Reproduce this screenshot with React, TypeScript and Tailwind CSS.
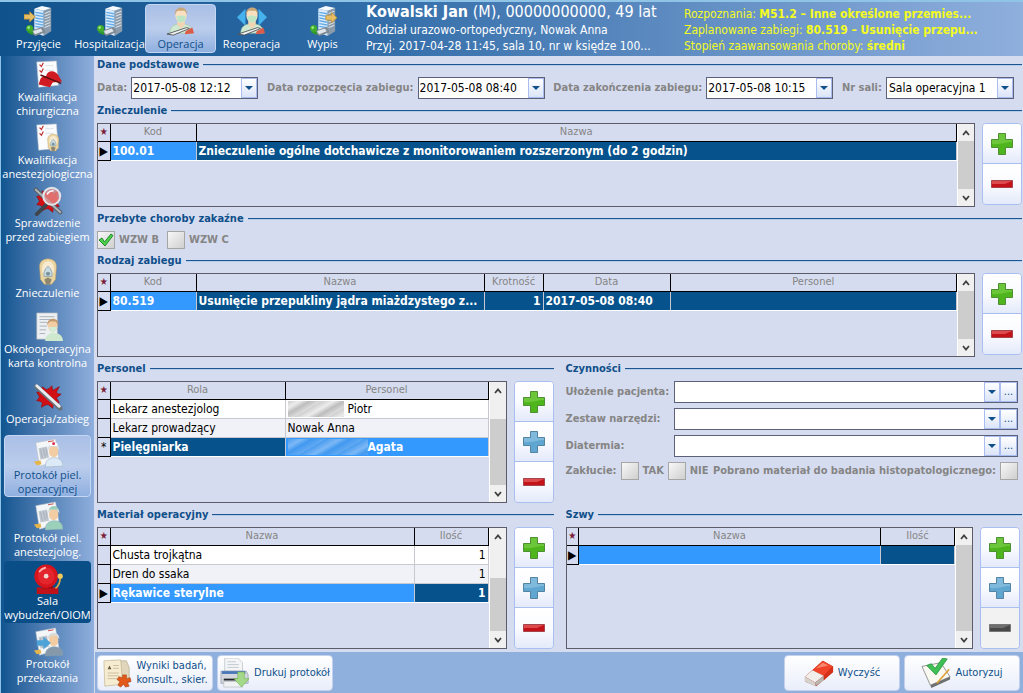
import { useState } from 'react';
import type { ReactNode } from 'react';

// ---------- icons ----------

const Svg = ({ children, className = 'w-[30px] h-[30px]' }: { children: ReactNode; className?: string }) => (
  <svg viewBox="0 0 32 32" className={`${className} shrink-0`} aria-hidden="true">{children}</svg>
);

const Building = () => (
  <g>
    <path d="M11 3 L21 5 L21 32 L11 28Z" fill="#dcecfb" />
    <path d="M21 5 L29 2 L29 27 L21 32Z" fill="#8b9bab" />
    <path d="M11 3 L19 0 L29 2 L21 5Z" fill="#f6fafe" />
    {[6, 9, 12, 15, 18, 21].map((y) => (
      <g key={y}>
        <path d={`M12 ${y} L20.500 ${y + 1.500} L20.500 ${y + 3} L12 ${y + 1.500}Z`} fill="#64abe6" />
        <path d={`M22 ${y + 1.500} L28 ${y - 1} L28 ${y} L22 ${y + 2.500}Z`} fill="#dfe6ec" />
      </g>
    ))}
    <path d="M6 27 L20 22 L23 28 L12 32Z" fill="#7f8991" />
    <path d="M9 27 L18 24 L20 27 L12 30Z" fill="#dfe5ea" />
    <circle cx="6" cy="24" r="3.800" fill="#3fae2a" />
    <circle cx="5" cy="23" r="1.400" fill="#a5ea8c" />
    <path d="M3 28 L10 27 L9 31Z" fill="#2f9a2a" />
  </g>
);

const GoldArrow = ({ x, y }: { x: number; y: number }) => (
  <path transform={`translate(${x} ${y})`} d="M0 3 H6 V0 L12 5.500 L6 11 V8 H0Z" fill="#e6bd62" stroke="#b98a2c" strokeWidth=".7" />
);

const Surgeon = () => (
  <g>
    <path d="M4 29 C4 21 10 19 16 19 C23 19 28 21 28 29Z" fill="#cfe8d0" stroke="#9cc3a5" strokeWidth=".6" />
    <path d="M12 16 H20 V20 L16 24 L12 20Z" fill="#f3d3b0" />
    <ellipse cx="16" cy="10" rx="6" ry="8" fill="#f8dfc0" />
    <path d="M9.500 9 C9 -1 23 -1 22.500 9 L20 5 H12Z" fill="#c9a57a" />
    <path d="M11 11 L16 10 L21 11 L20 16 L16 18 L12 16Z" fill="#bfe6c4" />
    <path d="M1 30 L22 23 L25 24 L8 31Z" fill="#eef1f3" stroke="#4c4c4c" strokeWidth=".9" />
    <path d="M21 27 L28 23 L30 29 L20 30Z" fill="#dc5a48" />
  </g>
);

const Sheet = () => (
  <g>
    <path d="M4 2 L25 1 L27 27 L6 29Z" fill="#fafbfc" stroke="#bcc4cf" strokeWidth=".6" />
    <path d="M7 5 l2 2 l2-4 M7 11 l2 2 l2-4" fill="none" stroke="#c02a2a" strokeWidth="1.200" />
    <path d="M13 6 H22 M13 11 H22" stroke="#dde1e7" />
  </g>
);

const Blood = () => (
  <path d="M4 11 L9 10 L10 5 L14 8 Q17 8 20 4 L21 9 L28 5 L25 11 Q26 13 30 13 L25 17 L28 22 L22 22 L21 28 L16 24 Q13 24 9 27 L10 22 Q8 20 4 20 L7 16Z" fill="#d20f14" stroke="#8f0a0d" strokeWidth=".7" />
);

const Mask = () => (
  <g>
    <path d="M7 12 C6 0 26 0 25 12 L24 25 L20 30 H12 L8 25Z" fill="#ead5a0" stroke="#b59a62" strokeWidth=".6" />
    <ellipse cx="16" cy="14" rx="6.500" ry="8.500" fill="#f7ead0" />
    <path d="M16 11 C20 14 21 19 20 22 H12 C11 19 12 14 16 11Z" fill="#c6dbe2" stroke="#7f98a3" strokeWidth=".8" />
    <circle cx="16" cy="19" r="2.200" fill="#7b929d" />
    <path d="M12 25 L16 23 L20 25 L18 30 H14Z" fill="#8e8770" />
  </g>
);

const Records = ({ coat }: { coat: string }) => (
  <g>
    <path d="M3 5 L24 1 L28 24 L7 30Z" fill="#f4f6f8" stroke="#b7bec8" strokeWidth=".6" />
    <path d="M6 11 L15 9 L17 21 L8 23Z" fill="#c1c7cf" />
    <path d="M8 12 l2 9 M11 11 l2 9 M14 11 l1 8" stroke="#a3abb6" strokeWidth=".8" />
    <path d="M16 4 L22 3" stroke="#c94a4a" />
    <path d="M1 25 L8 24 L9 28 L4 29Z" fill="#e6b54a" />
    <path d="M13 31 C13 23 18 21 23 21 C28 21 32 24 32 30Z" fill={coat} stroke="#8aa4b8" strokeWidth=".5" />
    <ellipse cx="22" cy="14" rx="5" ry="6.500" fill="#f2cda3" />
    <path d="M16 13 C15 4 29 4 28 13 L25 9 H19Z" fill="#d8dde2" />
  </g>
);

const icons: Record<string, ReactNode> = {
  admission: <Svg><Building /><GoldArrow x={0} y={6} /></Svg>,
  hospital: <Svg><Building /></Svg>,
  surgery: <Svg><Surgeon /></Svg>,
  reoperation: (
    <Svg>
      <path d="M9 3 V21 L0 12Z M23 3 V21 L32 12Z" fill="#45b2ee" />
      <Surgeon />
    </Svg>
  ),
  discharge: <Svg><Building /><GoldArrow x={19} y={7} /></Svg>,
  surgicalCheck: (
    <Svg>
      <Sheet />
      <path d="M8 20 Q10 17 14 17 C15 10 25 10 28 18 L31 23 L21 24 L18 29 L6 26Z" fill="#d01b22" />
      <path d="M8 16 L30 25" stroke="#5c0d10" strokeWidth="1.500" />
    </Svg>
  ),
  anesthesiaCheck: <Svg><Sheet /><g transform="translate(11 10) scale(.66)"><Mask /></g></Svg>,
  inspection: (
    <Svg>
      <Blood />
      <path d="M3 4 L29 28" stroke="#5a6067" strokeWidth="4.500" strokeLinecap="round" />
      <path d="M3 4 L29 28" stroke="#aeb5bb" strokeWidth="2" strokeLinecap="round" />
      <path d="M15 19 L4 30" stroke="#3f454b" strokeWidth="4" strokeLinecap="round" />
      <circle cx="20" cy="11" r="9" fill="#e88f8c" fillOpacity=".75" stroke="#dfe3e7" strokeWidth="2.200" />
      <path d="M15 9 Q17 5 22 5" fill="none" stroke="#fff" strokeWidth="1.500" />
    </Svg>
  ),
  anesthesia: <Svg><Mask /></Svg>,
  checklist: (
    <Svg>
      <path d="M4 1 H26 V29 H4Z" fill="#edf0f2" stroke="#a8afb8" strokeWidth=".7" />
      <path d="M7 5 H23 M7 8 H20 M7 11 H15 M7 15 H15 M7 19 H14 M7 23 H13" stroke="#a7aeb7" />
      <path d="M13 31 C13 24 18 22 22 22 C27 22 32 25 32 31Z" fill="#cfe9cf" />
      <ellipse cx="21" cy="15" rx="5" ry="6.500" fill="#f2cda3" />
      <path d="M15 14 C15 5 28 5 27 14 L24 10 H18Z" fill="#c29a6c" />
      <path d="M17 16 H26 L24 20 L21 22 L18 20Z" fill="#d3ecd5" />
    </Svg>
  ),
  operation: (
    <Svg>
      <Blood />
      <path d="M4 5 L29 28" stroke="#6b7278" strokeWidth="5" strokeLinecap="round" />
      <path d="M4 4 L28 26" stroke="#e9edf0" strokeWidth="3" strokeLinecap="round" />
    </Svg>
  ),
  nurseProtocol: <Svg><Records coat="#dce9f6" /><path d="M18 7 H26" stroke="#fff" strokeWidth="3" /><circle cx="22" cy="6" r="1.500" fill="#d24" /></Svg>,
  anesthProtocol: <Svg><Records coat="#9bd0ba" /><path d="M17 9 C18 4 27 4 27 9Z" fill="#9bd0ba" /></Svg>,
  bell: (
    <Svg>
      <path d="M4 25 H27 V32 H4Z" fill="#c01219" />
      <path d="M10 20 H21 V26 H10Z" fill="#97090f" />
      <circle cx="14" cy="13" r="12.500" fill="#d8141c" />
      <circle cx="14" cy="13" r="9" fill="#e3262e" />
      <circle cx="14" cy="13" r="2.500" fill="#f3d9d0" />
      <path d="M7 8 Q9 5 13 4" fill="none" stroke="#ffb5b0" strokeWidth="2" strokeLinecap="round" />
      <path d="M24 26 Q29 22 29 14" fill="none" stroke="#d9a845" strokeWidth="1.800" />
      <circle cx="29" cy="13" r="2.800" fill="#eecb5a" />
    </Svg>
  ),
  transfer: (
    <Svg>
      <Records coat="#8599ab" />
      <path d="M4 14 H11 V10 L19 17 L11 24 V20 H4Z" fill="#4da3d8" />
    </Svg>
  ),
  results: (
    <Svg>
      <path d="M10 3 H26 L29 10 V26 H10Z" fill="#e0d6bb" stroke="#a99d7e" strokeWidth=".6" />
      <path d="M2 3 L20 2 L22 28 L3 30Z" fill="#f5ecd2" stroke="#b8a981" strokeWidth=".6" />
      <path d="M8 8 l2 4 h-4Z" fill="#6a5a3a" />
      <path d="M12 8 H18 M12 11 H18 M6 16 H18 M6 19 H18 M6 22 H16" stroke="#cbbd9c" />
      <path d="M22 18 h4 v4 l4-1 1 4 -4 1 2 4 -4 1 -2-3 -3 3 -3-2 2-4 -3-2 2-3 4 1Z" fill="#e2591a" stroke="#a83c0d" strokeWidth=".6" />
    </Svg>
  ),
  printer: (
    <Svg>
      <path d="M5 0 H19 L24 5 V14 H5Z" fill="#f3f5f7" stroke="#b4bac2" strokeWidth=".7" />
      <path d="M8 4 H17 M8 7 H20 M8 10 H20" stroke="#c3c9d0" />
      <path d="M1 14 H28 L30 18 V27 H1Z" fill="#d3d7dd" stroke="#8b94a0" strokeWidth=".7" />
      <path d="M2 14 H27 V17 H2Z" fill="#4a77b8" />
      <path d="M4 22 H22 V24 H4Z" fill="#22262c" />
      <path d="M4 25 H24 V31 H4Z" fill="#f0f2f4" stroke="#a9b0b9" strokeWidth=".6" />
      <path d="M19 15 H26 V22 H31 L23 31 L15 22 H19Z" fill="#a5d98a" stroke="#6fb04c" strokeWidth=".6" />
    </Svg>
  ),
  eraser: (
    <Svg>
      <path d="M1 20 L20 3 L31 9 V15 L13 30 L1 25Z" fill="#a51c0c" />
      <path d="M9 13 L20 3 L31 9 L21 19Z" fill="#f0452a" />
      <path d="M21 19 L31 9 V15 L21 24Z" fill="#d7301a" />
      <path d="M9 13 L21 19 L12 26 L1 20Z" fill="#f1efec" />
      <path d="M1 20 L12 26 V30 L1 25Z" fill="#d5d1cc" />
      <path d="M12 26 L21 19 V24 L12 30Z" fill="#bbb6b0" />
      <path d="M13 11 L20 5 L26 8Z" fill="#f98a70" />
    </Svg>
  ),
  approve: (
    <Svg>
      <path d="M1 9 L21 5 L31 20 L10 29Z" fill="#f9f8f1" stroke="#77787a" strokeWidth=".8" />
      <path d="M10 29 L31 20 V23 L11 32Z" fill="#6d6e70" />
      <path d="M17 27 L30 12" stroke="#e0a23a" strokeWidth="1.800" />
      <path d="M6 8 L11 6 L15 11 L23 0 L28 1 L16 18Z" fill="#3fc055" stroke="#1c8a33" strokeWidth=".7" />
    </Svg>
  ),
};

const Plus = ({ blue = false }: { blue?: boolean }) => (
  <svg viewBox="0 0 22 22" className="w-[22px] h-[22px]" aria-hidden="true">
    <path d="M7.500 .5 H14.500 V6.500 H21.500 V14.500 H14.500 V21.500 H7.500 V14.500 H.5 V6.500 H7.500Z" fill={blue ? '#5fa6d0' : '#4fb51c'} stroke={blue ? '#5584a3' : '#4f8f33'} />
    <path d="M8 1 H14 V7 H21 V9 C14 9 10 12 1 11 V7 H8Z" fill={blue ? '#7fb9dc' : '#6cc63a'} />
  </svg>
);

const Minus = ({ gray = false }: { gray?: boolean }) => (
  <svg viewBox="0 0 22 8" className="w-[22px] h-2" aria-hidden="true">
    <path d="M.5 .5 H21.500 V7.500 H.5Z" fill={gray ? '#484848' : '#c4121a'} stroke={gray ? '#777' : '#a5444a'} />
    <path d="M1 1 H21 L14 4 H1Z" fill={gray ? '#6e6e6e' : '#dc4a4e'} />
  </svg>
);

const Caret = () => (
  <svg viewBox="0 0 8 4" className="w-2 h-1" aria-hidden="true"><path d="M0 0 H8 L4 4Z" fill="#0f4f8a" /></svg>
);

const Chevron = ({ down = false }: { down?: boolean }) => (
  <svg viewBox="0 0 8 6" className="w-2 h-1.5" aria-hidden="true">
    <path d={down ? 'M1 1 L4 4.500 L7 1' : 'M1 5 L4 1.500 L7 5'} fill="none" stroke="#404040" strokeWidth="1.800" />
  </svg>
);

// ---------- controls ----------

const Section = ({ title, children }: { title: string; children: ReactNode }) => (
  <section className="flex flex-col gap-1 min-w-0">
    <div className="flex items-center gap-1 h-4">
      <h2 className="text-[11px] leading-4 font-bold text-[#0f4f8a]">{title}</h2>
      <div className="flex-1 h-0.5 border-t border-[#1d5590] bg-[#b3cdea]" />
    </div>
    {children}
  </section>
);

const arrowBox = 'flex items-center justify-center w-4 border border-[#a9bdf0] bg-gradient-to-b from-white to-[#dbe4f8]';

const DateField = ({ id, label, value }: { id: string; label: string; value: string }) => (
  <div className="flex items-center gap-1">
    <label htmlFor={id} className="whitespace-nowrap text-[11px] font-bold text-[#858585]">{label}</label>
    <div className="flex w-[127px] h-[22px] border border-[#5c6078] bg-white">
      <input id={id} defaultValue={value} className="flex-1 min-w-0 px-px text-[12px] text-black outline-none" />
      <button aria-label="Wybierz datę" className={arrowBox}><Caret /></button>
    </div>
  </div>
);

const SelectField = ({ id, options, more = false }: { id: string; options: string[]; more?: boolean }) => (
  <div className="flex flex-1 min-w-0 h-[22px] border border-[#5c6078] bg-white">
    <div className="relative flex flex-1 min-w-0">
      <select id={id} className="w-full appearance-none pl-0.5 pr-4 text-[12px] text-black outline-none">
        {options.map((o) => <option key={o}>{o}</option>)}
      </select>
      <span className={`${arrowBox} absolute inset-y-0 right-0 pointer-events-none`}><Caret /></span>
    </div>
    {more && (
      <button aria-label="Więcej" className="w-[17px] border border-[#a9bdf0] bg-gradient-to-b from-white to-[#dbe4f8] text-[11px] leading-4 text-[#0f4f8a]">...</button>
    )}
  </div>
);

const Check = ({ label, checked = false, before = false }: { label: string; checked?: boolean; before?: boolean }) => (
  <label className="flex items-center gap-1 text-[11px] font-bold text-[#858585] whitespace-nowrap">
    {before && label}
    <span className="relative flex">
      <input
        type="checkbox"
        defaultChecked={checked}
        className="peer appearance-none w-[18px] h-[18px] border border-[#a6a6a6] bg-gradient-to-br from-[#f8f8f8] to-[#cfcfcf]"
      />
      <svg viewBox="0 0 18 18" className="hidden peer-checked:block absolute inset-0 w-[18px] h-[18px] pointer-events-none" aria-hidden="true">
        <path d="M2 9 L5 7 L7.500 11 L14 3 L16 4.500 L8 15Z" fill="#4fd04a" stroke="#1f8a2a" />
      </svg>
    </span>
    {!before && label}
  </label>
);

const Actions = ({ kinds }: { kinds: string[] }) => (
  <div className="flex flex-col w-10 shrink-0 self-start rounded border border-[#a9bff0] overflow-hidden divide-y divide-[#a9bff0]">
    {kinds.map((k) => (
      <button
        key={k}
        aria-label={k === 'add' ? 'Dodaj' : k === 'copy' ? 'Dodaj wiele' : 'Usuń'}
        disabled={k === 'off'}
        className="flex items-center justify-center h-10 bg-gradient-to-b from-white via-[#fafbff] to-[#e4eafa] disabled:from-[#f2f2f2] disabled:via-[#f2f2f2] disabled:to-[#f2f2f2]"
      >
        {k === 'add' && <Plus />}
        {k === 'copy' && <Plus blue />}
        {k === 'remove' && <Minus />}
        {k === 'off' && <Minus gray />}
      </button>
    ))}
  </div>
);

type Column = { name: string; width?: string; right?: boolean };

type GridProps = {
  label: string;
  height: string;
  columns: Column[];
  rows: ReactNode[][];
  selected: number;
  focus: number;
  marker?: string;
  thumb?: string;
};

const Grid = ({ label, height, columns, rows, selected, focus, marker = '▶', thumb = 'flex-1' }: GridProps) => (
  <div className={`flex flex-1 min-w-0 border border-[#5c5c68] ${height}`}>
    <div className="flex-1 min-w-0">
      <table aria-label={label} className="w-full table-fixed border-collapse">
        <thead>
          <tr className="h-[17px] text-[11px] leading-4 text-[#858585]">
            <th className="w-3 p-0 border-r border-b border-black text-[10px] leading-4 font-normal text-[#7a1f3a]">★</th>
            {columns.map((c) => (
              <th key={c.name} className={`${c.width ?? ''} p-0 border-r border-b border-black font-normal`}>{c.name}</th>
            ))}
          </tr>
        </thead>
        <tbody>
          {rows.map((row, i) => {
            const on = i === selected;
            return (
              <tr key={i} className={on ? 'h-[19px] text-[12px] leading-4 font-bold text-white' : 'h-[19px] text-[12px] leading-4 text-black'}>
                <td className="p-0 border-r border-b border-black text-center text-[12px] leading-4 font-normal text-black">{on ? marker : ''}</td>
                {row.map((cell, j) => {
                  const tone = on
                    ? j === focus ? 'bg-[#3399ff] border-b-white' : 'bg-[#05528c] border-b-white'
                    : i % 2 ? 'bg-[#f1f2f8] border-b-[#c8c8d0]' : 'bg-white border-b-[#c8c8d0]';
                  return (
                    <td key={j} className={`${tone} ${columns[j].right ? 'text-right' : ''} px-0.5 py-0 border-r border-b border-r-[#c8c8d0] truncate`}>
                      {cell}
                    </td>
                  );
                })}
              </tr>
            );
          })}
        </tbody>
      </table>
    </div>
    <div className="flex flex-col w-[17px] shrink-0 border-l border-white bg-[#f0f0f0]">
      <button aria-label="W górę" className="flex items-center justify-center h-[17px]"><Chevron /></button>
      <div className="flex flex-col flex-1 justify-end">
        <div className={`${thumb} bg-[#cdcdcd]`} />
      </div>
      <button aria-label="W dół" className="flex items-center justify-center h-[17px]"><Chevron down /></button>
    </div>
  </div>
);

const Redacted = ({ onBlue = false }: { onBlue?: boolean }) => (
  <span
    className={
      onBlue
        ? 'inline-block align-top w-20 h-4 bg-[repeating-linear-gradient(150deg,#4a9cf0_0px,#7cb8f6_7px,#4299f0_12px,#62aaf2_19px)]'
        : 'inline-block align-top w-14 h-4 mr-1 bg-[repeating-linear-gradient(150deg,#cfcfcf_0px,#ececec_6px,#bdbdbd_11px,#dedede_17px)]'
    }
  />
);

const FooterButton = ({ icon, children }: { icon: string; children: ReactNode }) => (
  <button className="flex items-center justify-center gap-1 w-29 h-9 rounded-sm border border-[#c3d0ee] bg-gradient-to-b from-white to-[#e9eefa] text-[11px] leading-[14px] text-left text-[#0f4f8a] whitespace-nowrap">
    {icons[icon]}
    <span>{children}</span>
  </button>
);

// ---------- data ----------

const tabs = [
  { id: 'admission', label: 'Przyjęcie' },
  { id: 'hospital', label: 'Hospitalizacja' },
  { id: 'surgery', label: 'Operacja' },
  { id: 'reoperation', label: 'Reoperacja' },
  { id: 'discharge', label: 'Wypis' },
];

const menu = [
  { id: 'surgicalCheck', lines: ['Kwalifikacja', 'chirurgiczna'] },
  { id: 'anesthesiaCheck', lines: ['Kwalifikacja', 'anestezjologiczna'] },
  { id: 'inspection', lines: ['Sprawdzenie', 'przed zabiegiem'] },
  { id: 'anesthesia', lines: ['Znieczulenie'] },
  { id: 'checklist', lines: ['Okołooperacyjna', 'karta kontrolna'] },
  { id: 'operation', lines: ['Operacja/zabieg'] },
  { id: 'nurseProtocol', lines: ['Protokół piel.', 'operacyjnej'] },
  { id: 'anesthProtocol', lines: ['Protokół piel.', 'anestezjolog.'] },
  { id: 'bell', lines: ['Sala', 'wybudzeń/OIOM'], dark: true },
  { id: 'transfer', lines: ['Protokół', 'przekazania'] },
];

const activities = [
  { id: 'position', label: 'Ułożenie pacjenta:' },
  { id: 'tools', label: 'Zestaw narzędzi:' },
  { id: 'diathermy', label: 'Diatermia:' },
];

const activeItem = 'rounded border border-[#c3d6f4] bg-gradient-to-b from-[#a9bfe6] via-[#bccdec] to-[#8fb0e0] text-[#0f4f8a]';

export default function App() {
  const [tab, setTab] = useState('surgery');
  const [page, setPage] = useState('nurseProtocol');

  return (
    <div className="flex flex-col min-h-screen bg-[#d6dcef] font-['DejaVu_Sans_Condensed','DejaVu_Sans',sans-serif]">
      <header className="flex h-14 border-t-2 border-[#8fc4e6] bg-gradient-to-r from-[#0f528c] via-[#2f6ca8] via-35% to-[#8fafdd] text-white">
        <nav className="flex pl-[3px] pt-0.5 font-['Open_Sans',sans-serif]">
          {tabs.map((t) => (
            <button
              key={t.id}
              onClick={() => setTab(t.id)}
              className={`flex flex-col items-center w-[71px] h-[49px] pt-px text-[11px] leading-4 whitespace-nowrap ${tab === t.id ? activeItem : 'border border-transparent'}`}
            >
              {icons[t.id]}
              {t.label}
            </button>
          ))}
        </nav>
        <div className="w-[310px] ml-2 text-[12px] leading-4 whitespace-nowrap">
          <h1 className="text-[16px] leading-5"><b>Kowalski Jan</b> (M), 00000000000, 49 lat</h1>
          <p>Oddział urazowo-ortopedyczny, Nowak Anna</p>
          <p>Przyj. 2017-04-28 11:45, sala 10, nr w księdze 100...</p>
        </div>
        <div className="flex-1 min-w-0 ml-2 pt-1 text-[12px] leading-4 text-[#f4fb22] whitespace-nowrap">
          <p>Rozpoznania: <b>M51.2 – Inne określone przemies...</b></p>
          <p>Zaplanowane zabiegi: <b>80.519 – Usunięcie przepu...</b></p>
          <p>Stopień zaawansowania choroby: <b>średni</b></p>
        </div>
      </header>

      <div className="flex flex-1">
        <aside className="flex flex-col gap-px w-[94px] mr-px shrink-0 px-[3px] pt-px border-l border-[#8fc4e6] bg-gradient-to-r from-[#0f5590] to-[#8fafdd] font-['Open_Sans',sans-serif]">
          {menu.map((m) => (
            <button
              key={m.id}
              onClick={() => setPage(m.id)}
              className={`flex flex-col items-center justify-center h-[62px] pt-0.5 text-[11px] leading-[14px] ${page === m.id ? activeItem : m.dark ? 'rounded border border-transparent bg-[#0a4e88] text-white' : 'border border-transparent text-white'}`}
            >
              {icons[m.id]}
              {m.lines.map((l) => <span key={l} className="whitespace-nowrap">{l}</span>)}
            </button>
          ))}
        </aside>

        <div className="flex flex-col flex-1 min-w-0">
          <main className="flex flex-col flex-1 gap-1 pt-px pl-0.5 pr-px">
            <Section title="Dane podstawowe">
              <div className="flex items-center justify-between pr-2">
                <DateField id="date" label="Data:" value="2017-05-08 12:12" />
                <DateField id="start" label="Data rozpoczęcia zabiegu:" value="2017-05-08 08:40" />
                <DateField id="end" label="Data zakończenia zabiegu:" value="2017-05-08 10:15" />
                <div className="flex items-center gap-1 w-[172px]">
                  <label htmlFor="room" className="whitespace-nowrap text-[11px] font-bold text-[#858585]">Nr sali:</label>
                  <SelectField id="room" options={['Sala operacyjna 1']} />
                </div>
              </div>
            </Section>

            <Section title="Znieczulenie">
              <div className="flex gap-[7px]">
                <Grid
                  label="Znieczulenie"
                  height="h-21"
                  columns={[{ name: 'Kod', width: 'w-[86px]' }, { name: 'Nazwa' }]}
                  rows={[['100.01', 'Znieczulenie ogólne dotchawicze z monitorowaniem rozszerzonym (do 2 godzin)']]}
                  selected={0}
                  focus={0}
                />
                <Actions kinds={['add', 'remove']} />
              </div>
            </Section>

            <Section title="Przebyte choroby zakaźne">
              <div className="flex gap-2">
                <Check label="WZW B" checked />
                <Check label="WZW C" />
              </div>
            </Section>

            <Section title="Rodzaj zabiegu">
              <div className="flex gap-[7px]">
                <Grid
                  label="Rodzaj zabiegu"
                  height="h-21"
                  columns={[
                    { name: 'Kod', width: 'w-[86px]' },
                    { name: 'Nazwa', width: 'w-[288px]' },
                    { name: 'Krotność', width: 'w-[59px]', right: true },
                    { name: 'Data', width: 'w-[127px]' },
                    { name: 'Personel' },
                  ]}
                  rows={[['80.519', 'Usunięcie przepukliny jądra miażdzystego z...', '1', '2017-05-08 08:40', '']]}
                  selected={0}
                  focus={0}
                />
                <Actions kinds={['add', 'remove']} />
              </div>
            </Section>

            <div className="grid grid-cols-2 gap-x-3 gap-y-1">
              <Section title="Personel">
                <div className="flex gap-[7px]">
                  <Grid
                    label="Personel"
                    height="h-[122px]"
                    columns={[{ name: 'Rola', width: 'w-[175px]' }, { name: 'Personel' }]}
                    rows={[
                      ['Lekarz anestezjolog', <><Redacted />Piotr</>],
                      ['Lekarz prowadzący', 'Nowak Anna'],
                      ['Pielęgniarka', <><Redacted onBlue />Agata</>],
                    ]}
                    selected={2}
                    focus={1}
                    marker="*"
                    thumb="h-[66px]"
                  />
                  <Actions kinds={['add', 'copy', 'remove']} />
                </div>
              </Section>

              <Section title="Czynności">
                <div className="flex flex-col gap-[5px] pr-1">
                  {activities.map((a) => (
                    <div key={a.id} className="flex items-center">
                      <label htmlFor={a.id} className="w-27 text-[11px] font-bold text-[#858585] whitespace-nowrap">{a.label}</label>
                      <SelectField id={a.id} options={['']} more />
                    </div>
                  ))}
                  <div className="flex items-center gap-1 text-[11px] font-bold text-[#858585]">
                    <span>Zakłucie:</span>
                    <Check label="TAK" />
                    <Check label="NIE" />
                    <div className="ml-auto"><Check label="Pobrano materiał do badania histopatologicznego:" before /></div>
                  </div>
                </div>
              </Section>

              <Section title="Materiał operacyjny">
                <div className="flex gap-[7px]">
                  <Grid
                    label="Materiał operacyjny"
                    height="h-[122px]"
                    columns={[{ name: 'Nazwa' }, { name: 'Ilość', width: 'w-[74px]', right: true }]}
                    rows={[['Chusta trojkątna', '1'], ['Dren do ssaka', '1'], ['Rękawice sterylne', '1']]}
                    selected={2}
                    focus={0}
                    thumb="h-[53px]"
                  />
                  <Actions kinds={['add', 'copy', 'remove']} />
                </div>
              </Section>

              <Section title="Szwy">
                <div className="flex gap-[7px] pr-0.5">
                  <Grid
                    label="Szwy"
                    height="h-[122px]"
                    columns={[{ name: 'Nazwa' }, { name: 'Ilość', width: 'w-[74px]', right: true }]}
                    rows={[['', '']]}
                    selected={0}
                    focus={0}
                  />
                  <Actions kinds={['add', 'copy', 'off']} />
                </div>
              </Section>
            </div>
          </main>

          <footer className="flex items-center gap-1 h-[41px] pl-0.5 pr-[3px] bg-[#8fafdd]">
            <FooterButton icon="results">Wyniki badań,<br />konsult., skier.</FooterButton>
            <FooterButton icon="printer">Drukuj protokół</FooterButton>
            <div className="flex-1" />
            <FooterButton icon="eraser">Wyczyść</FooterButton>
            <FooterButton icon="approve">Autoryzuj</FooterButton>
          </footer>
        </div>
      </div>
    </div>
  );
}
